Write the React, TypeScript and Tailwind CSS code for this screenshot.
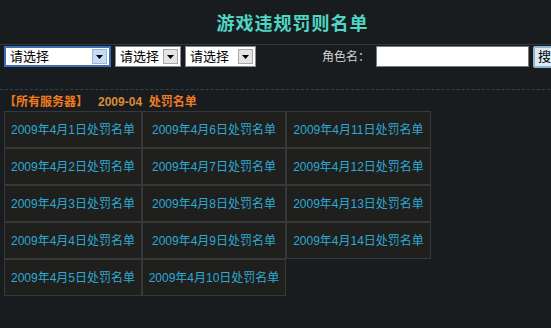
import React from 'react';

const font = { fontFamily: '"Liberation Sans", "Noto Sans CJK SC", sans-serif' };

const rows = [
  [1, 6, 11],
  [2, 7, 12],
  [3, 8, 13],
  [4, 9, 14],
  [5, 10],
];

function FakeSelect({ width, focused }: { width: string; focused?: boolean }) {
  return (
    <div
      className={`${width} h-[21px] bg-white flex items-center justify-between pl-[4px] pr-[2px] ${
        focused ? 'border-2 border-[#3d6fb6]' : 'border border-[#8a8a8a]'
      }`}
    >
      <span className="text-[13px] leading-none text-black">请选择</span>
      <span
        className={`w-[15px] h-[15px] flex items-center justify-center border ${
          focused ? 'border-[#9cb4d8] bg-[#c6dcf4]' : 'border-[#a8a8a8] bg-[#e4e4e4]'
        }`}
      >
        <svg width="7" height="4" viewBox="0 0 7 4">
          <path d="M0 0h7L3.5 4z" fill="#000" />
        </svg>
      </span>
    </div>
  );
}

export default function App() {
  return (
    <div className="w-[551px] h-[328px] overflow-hidden bg-[#181c1f]" style={font}>
      <div className="w-[585px]">
        <div className="h-[44px] flex items-center justify-center">
          <h1 className="text-[18px] font-bold tracking-[1px] text-[#4fd6c4] leading-none mt-[4px]">
            游戏违规罚则名单
          </h1>
        </div>

        <div className="border-t border-[#30363a] pt-[1px] pl-[4px] flex items-center h-[23px]">
          <FakeSelect width="w-[107px]" focused />
          <div className="ml-[4px]">
            <FakeSelect width="w-[66px]" />
          </div>
          <div className="ml-[4px]">
            <FakeSelect width="w-[71px]" />
          </div>
          <span className="ml-[66px] text-[12px] text-[#d4d4d4]">角色名：</span>
          <div className="ml-[6px] w-[153px] h-[21px] bg-white border border-[#7a7a7a]" />
          <div className="ml-[4px] h-[22px] px-[3px] flex items-center bg-[#dce9f3] border-2 border-[#8fb6d0] rounded-[2px] text-[13px] text-black">
            搜索
          </div>
        </div>

        <div className="mt-[22px] border-t border-dashed border-[#394046]" />

        <div className="pl-[4px] pt-[5px] h-[21px] text-[12px] font-bold leading-[14px] whitespace-pre">
          <span className="text-[#f27a1c]">【所有服务器】</span>
          <span className="text-[#d88b3c]">   2009-04  </span>
          <span className="text-[#ef7b22]">处罚名单</span>
        </div>

        <div className="ml-[4px] grid grid-cols-[138px_144px_145px] w-[427px]">
          {rows.flatMap((r, ri) =>
            r.map((d) => (
              <div
                key={`${ri}-${d}`}
                className="h-[37px] flex items-center justify-center border border-[#383838] bg-[#1f1f1e] text-[12px] text-[#2ea9d2]"
              >
                2009年4月{d}日处罚名单
              </div>
            ))
          )}
        </div>
      </div>
    </div>
  );
}
